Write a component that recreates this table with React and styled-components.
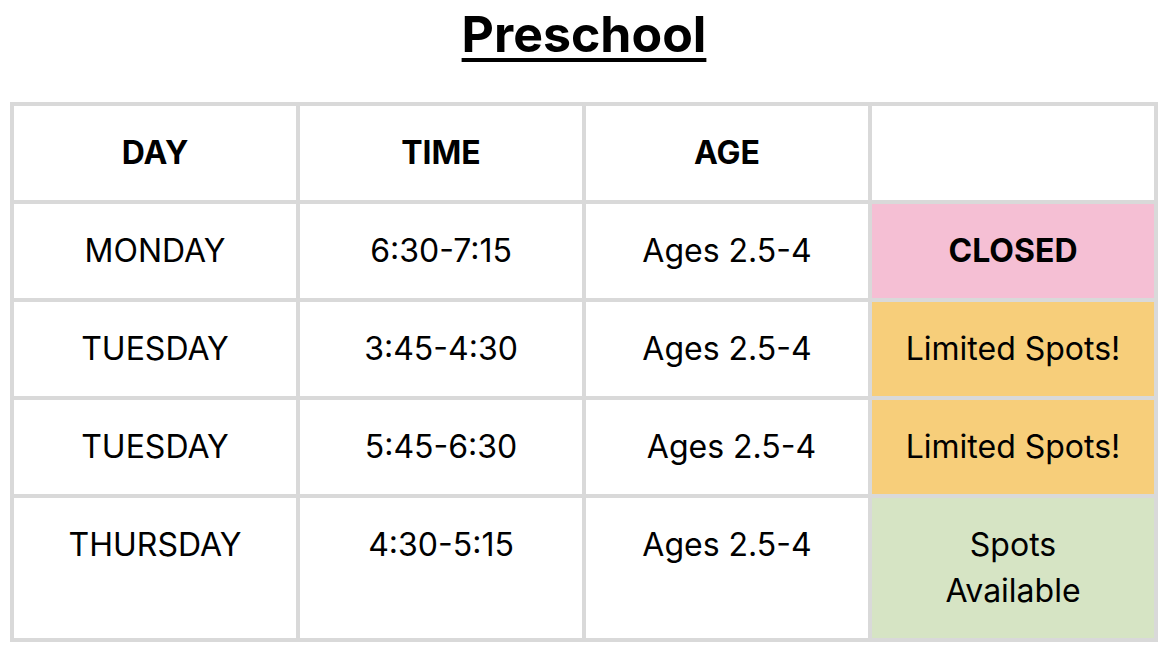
import React from "react";
import styled, { createGlobalStyle } from "styled-components";

const GlobalStyle = createGlobalStyle`
  html, body {
    margin: 0;
    padding: 0;
    background: #ffffff;
  }
  body {
    font-family: "Inter", "Liberation Sans", sans-serif;
    color: #000000;
  }
`;

const Page = styled.div`
  width: 1168px;
  height: 658px;
  padding: 0 10px;
  box-sizing: border-box;
  display: flex;
  flex-direction: column;
`;

const Title = styled.h1`
  margin: 0;
  height: 102px;
  display: flex;
  justify-content: center;
  padding-top: 3px;
  box-sizing: border-box;
  font-size: 50px;
  line-height: 62px;
  font-weight: 700;
  text-decoration: underline;
  text-decoration-thickness: 4px;
  text-underline-offset: 6px;
`;

const Grid = styled.div`
  display: grid;
  grid-template-columns: repeat(4, 1fr);
  gap: 4px;
  padding: 4px;
  background: #d9d9d9;
`;

const Cell = styled.div`
  background: ${(p) => p.$bg || "#ffffff"};
  padding: 24px 8px;
  line-height: 46px;
  font-size: 32px;
  font-weight: ${(p) => (p.$bold ? 700 : 400)};
  text-align: center;
  white-space: pre-line;
`;

const STATUS = {
  closed: { bg: "#f5bfd4", bold: true },
  limited: { bg: "#f7ce7a" },
  open: { bg: "#d6e4c4" },
};

const rows = [
  { day: "MONDAY", time: "6:30-7:15", age: "Ages 2.5-4", note: "CLOSED", status: "closed" },
  { day: "TUESDAY", time: "3:45-4:30", age: "Ages 2.5-4", note: "Limited Spots!", status: "limited" },
  { day: "TUESDAY", time: "5:45-6:30", age: "\u00a0Ages 2.5-4", note: "Limited Spots!", status: "limited" },
  { day: "THURSDAY", time: "4:30-5:15", age: "Ages 2.5-4", note: "Spots\nAvailable", status: "open" },
];

export default function App() {
  return (
    <>
      <GlobalStyle />
      <Page>
        <Title>Preschool</Title>
        <Grid>
          <Cell $bold>DAY</Cell>
          <Cell $bold>TIME</Cell>
          <Cell $bold>AGE</Cell>
          <Cell />
          {rows.map((r, i) => (
            <React.Fragment key={i}>
              <Cell>{r.day}</Cell>
              <Cell>{r.time}</Cell>
              <Cell>{r.age}</Cell>
              <Cell $bg={STATUS[r.status].bg} $bold={STATUS[r.status].bold}>
                {r.note}
              </Cell>
            </React.Fragment>
          ))}
        </Grid>
      </Page>
    </>
  );
}
